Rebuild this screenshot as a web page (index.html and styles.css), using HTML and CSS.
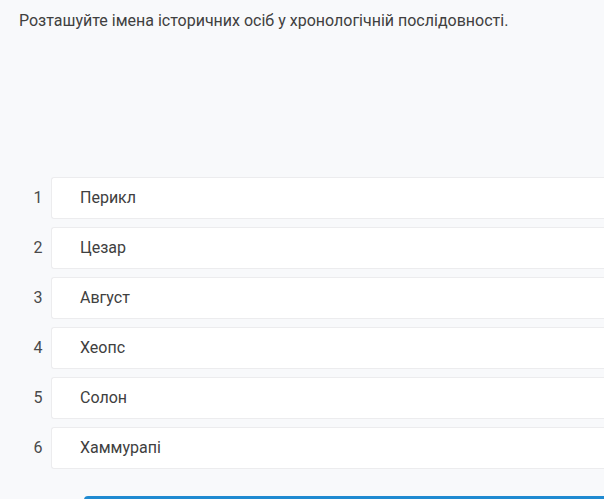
FILE: index.html
```html
<!DOCTYPE html>
<html lang="uk">
<head>
<meta charset="utf-8">
<link rel="stylesheet" href="styles.css">
</head>
<body>
<div class="page">
  <p class="question">Розташуйте імена історичних осіб у хронологічній послідовності.</p>
  <ol class="list">
    <li class="row"><span class="num">1</span><div class="card">Перикл</div></li>
    <li class="row"><span class="num">2</span><div class="card">Цезар</div></li>
    <li class="row"><span class="num">3</span><div class="card">Август</div></li>
    <li class="row"><span class="num">4</span><div class="card">Хеопс</div></li>
    <li class="row"><span class="num">5</span><div class="card">Солон</div></li>
    <li class="row"><span class="num">6</span><div class="card">Хаммурапі</div></li>
  </ol>
  <div class="footer"><button class="btn" type="button"></button></div>
</div>
</body>
</html>
```
FILE: styles.css
```css
* { box-sizing: border-box; }
html, body { margin: 0; padding: 0; }
body {
  background: #f8f9fb;
  font-family: Roboto, "Noto Sans", sans-serif;
  color: #3b3b3b;
  overflow: hidden;
  width: 604px;
  height: 499px;
}
.page {
  padding: 10px 0 0 19px;
  height: 499px;
  overflow: hidden;
}
.question {
  margin: 0;
  font-size: 16px;
  line-height: 22px;
  color: #404040;
}
.list {
  list-style: none;
  margin: 145px 0 0 0;
  padding: 0;
  display: flex;
  flex-direction: column;
  gap: 8px;
}
.row {
  display: flex;
  align-items: center;
  height: 42px;
}
.num {
  width: 32px;
  text-align: center;
  font-size: 16px;
  color: #4a4a4a;
  flex: none;
  margin-left: 3px;
  margin-right: -3px;
  padding-bottom: 2px;
}
.card {
  flex: none;
  width: 560px;
  height: 42px;
  background: #fff;
  border: 1px solid #ececee;
  border-right: none;
  border-radius: 3px 0 0 3px;
  padding: 0 0 2px 28px;
  display: flex;
  align-items: center;
  font-size: 16px;
  color: #404040;
}
.footer {
  margin-top: 27px;
  padding-left: 65px;
}
.btn {
  display: block;
  width: 520px;
  height: 40px;
  border: none;
  border-radius: 4px 0 0 4px;
  background: #1f8ad1;
}
```
